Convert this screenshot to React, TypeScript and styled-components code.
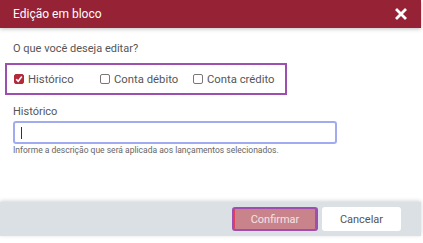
import { useState } from 'react';
import styled, { createGlobalStyle } from 'styled-components';

const GlobalStyle = createGlobalStyle`
  html, body {
    margin: 0;
    padding: 0;
    background: #ffffff;
  }
  body {
    font-family: Roboto, "Liberation Sans", Arial, sans-serif;
  }
  * {
    box-sizing: border-box;
  }
`;

const OPTIONS = ['Histórico', 'Conta débito', 'Conta crédito'];

function App() {
  const [checked, setChecked] = useState<string[]>(['Histórico']);

  const toggle = (name: string) => {
    setChecked(prev => (prev.includes(name) ? prev.filter(n => n !== name) : [...prev, name]));
  };

  return (
    <Modal>
      <GlobalStyle />
      <Header>
        <Title>Edição em bloco</Title>
        <CloseBtn aria-label="Fechar">
          <svg width="12" height="12" viewBox="0 0 12 12">
            <path d="M2 2 L10 10 M10 2 L2 10" stroke="#fff" strokeWidth="2.8" strokeLinecap="square" />
          </svg>
        </CloseBtn>
      </Header>
      <Body>
        <Question>O que você deseja editar?</Question>
        <OptionBox>
          {OPTIONS.map(name => {
            const isOn = checked.includes(name);
            return (
              <Option key={name} onClick={() => toggle(name)}>
                <Box checked={isOn}>
                  {isOn && (
                    <svg width="8" height="8" viewBox="0 0 8 8">
                      <path d="M1.2 4.2 L3.2 6.2 L6.8 1.6" stroke="#fff" strokeWidth="1.6" fill="none" />
                    </svg>
                  )}
                </Box>
                {name}
              </Option>
            );
          })}
        </OptionBox>
        <Field>
          <FieldLabel>Histórico</FieldLabel>
          <TextInput>
            <Caret />
          </TextInput>
          <Help>Informe a descrição que será aplicada aos lançamentos selecionados.</Help>
        </Field>
      </Body>
      <Footer>
        <ConfirmBtn>Confirmar</ConfirmBtn>
        <CancelBtn>Cancelar</CancelBtn>
      </Footer>
    </Modal>
  );
}

export default App;

const Modal = styled.div`
  width: 421px;
  height: 243px;
  display: flex;
  flex-direction: column;
  background: #ffffff;
`;

const Header = styled.div`
  height: 28px;
  padding: 0 14px 0 13px;
  display: flex;
  align-items: center;
  justify-content: space-between;
  background: #952335;
  box-shadow: 0 1px 4px rgba(0, 0, 0, 0.25);
  position: relative;
  z-index: 1;
`;

const Title = styled.span`
  color: #ffffff;
  font-size: 12px;
`;

const CloseBtn = styled.div`
  display: flex;
  align-items: center;
`;

const Body = styled.div`
  flex: 1;
  padding-top: 14px;
  display: flex;
  flex-direction: column;
`;

const Question = styled.div`
  padding-left: 13px;
  font-size: 11px;
  color: #555555;
  line-height: 13px;
`;

const OptionBox = styled.div`
  margin: 9px 0 0 5px;
  width: 282px;
  height: 31px;
  border: 2px solid #9d4fb0;
  border-top-width: 1px;
  box-shadow: 0 -1px 0 #e0415a;
  display: grid;
  grid-template-columns: 86px 93px auto;
  align-items: center;
  padding-left: 7px;
`;

const Option = styled.label`
  display: flex;
  align-items: center;
  gap: 4px;
  font-size: 11.3px;
  color: #555555;
  cursor: pointer;
`;

const Box = styled.span<{ checked: boolean }>`
  width: 10px;
  height: 10px;
  border-radius: 2px;
  border: 1px solid ${p => (p.checked ? '#b32a3c' : '#777777')};
  background: ${p => (p.checked ? '#b32a3c' : '#ffffff')};
  display: flex;
  align-items: center;
  justify-content: center;
`;

const Field = styled.div`
  margin-top: 10px;
  padding-left: 13px;
  display: flex;
  flex-direction: column;
`;

const FieldLabel = styled.div`
  font-size: 11px;
  color: #555555;
  line-height: 13px;
`;

const TextInput = styled.div`
  margin-top: 3px;
  width: 324px;
  height: 23px;
  border: 2px solid #a3abf0;
  border-radius: 3px;
  display: flex;
  align-items: center;
  padding-left: 6px;
`;

const Caret = styled.span`
  width: 1px;
  height: 12px;
  background: #333333;
`;

const Help = styled.div`
  margin-top: 1px;
  font-size: 8.5px;
  color: #666666;
`;

const Footer = styled.div`
  height: 34px;
  margin-bottom: 7px;
  background: #dae0e3;
  box-shadow: 0 -1px 4px rgba(0, 0, 0, 0.18);
  display: flex;
  align-items: center;
  justify-content: flex-end;
  padding-right: 20px;
  gap: 4px;
`;

const BaseBtn = styled.div`
  height: 24px;
  border-radius: 3px;
  display: flex;
  align-items: center;
  justify-content: center;
  font-size: 11px;
`;

const ConfirmBtn = styled(BaseBtn)`
  width: 86px;
  background: #c9838a;
  color: #f4e4e6;
  border: 2px solid #9d4fb0;
  box-shadow: inset 1px 0 0 #e0415a, inset -1px 0 0 #e0415a;
`;

const CancelBtn = styled(BaseBtn)`
  width: 79px;
  background: #ffffff;
  color: #555555;
`;
